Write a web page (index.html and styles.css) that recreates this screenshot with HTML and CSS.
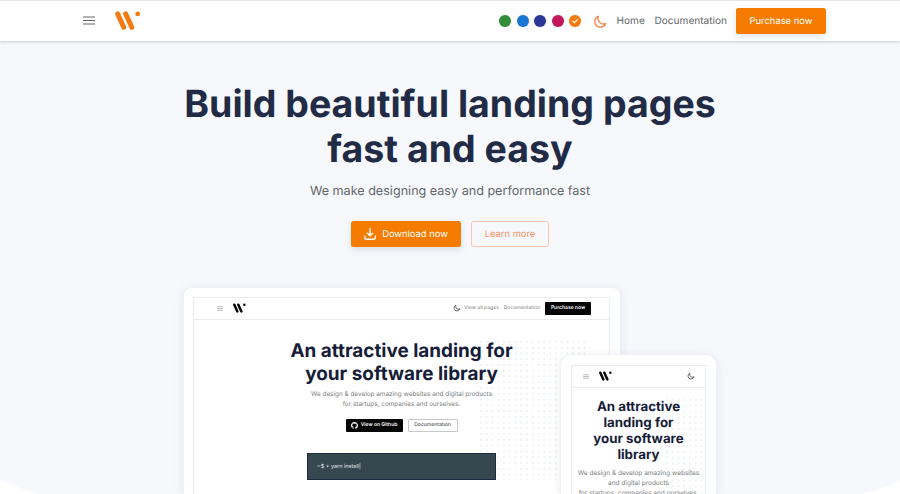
FILE: index.html
```html
<!DOCTYPE html>
<html lang="en">
<head>
<meta charset="utf-8">
<title>Build beautiful landing pages</title>
<link rel="stylesheet" href="styles.css">
</head>
<body>
<svg class="sprite" aria-hidden="true">
  <symbol id="logo" viewBox="0 0 26 19">
    <path d="M2.7 2.9 8.7 16.3M10.7 2.9 16.8 16.3" fill="none" stroke="currentColor" stroke-width="5" stroke-linecap="round"/>
    <circle cx="22.7" cy="2.9" r="2.4" fill="currentColor"/>
  </symbol>
  <symbol id="moon" viewBox="0 0 24 24">
    <path d="M20.354 15.354A9 9 0 0 1 8.646 3.646 9.003 9.003 0 0 0 12 21a9.003 9.003 0 0 0 8.354-5.646z" fill="none" stroke="currentColor" stroke-width="2" stroke-linecap="round" stroke-linejoin="round"/>
  </symbol>
  <symbol id="menu" viewBox="0 0 12 9">
    <path d="M0 1h12M0 4.5h12M0 8h12" fill="none" stroke="currentColor" stroke-width="1"/>
  </symbol>
</svg>

<header class="topbar">
  <svg class="topbar-menu"><use href="#menu"/></svg>
  <svg class="topbar-logo"><use href="#logo"/></svg>
  <div class="swatches">
    <span class="swatch green"></span>
    <span class="swatch blue"></span>
    <span class="swatch indigo"></span>
    <span class="swatch pink"></span>
    <span class="swatch orange"><svg viewBox="0 0 12 12"><path d="M3.8 6.2 5.4 7.7 8.4 4.6" fill="none" stroke="currentColor" stroke-width="1.1" stroke-linecap="round"/></svg></span>
  </div>
  <svg class="topbar-moon"><use href="#moon"/></svg>
  <a class="link home">Home</a>
  <a class="link docs">Documentation</a>
  <a class="btn purchase">Purchase now</a>
</header>

<main class="hero">
  <svg class="curve" viewBox="0 0 900 14" preserveAspectRatio="none"><path d="M0 0Q18 8 38 14H0zM900 0Q884 8 862 14H900z" fill="#fff"/></svg>
  <h1>Build beautiful landing pages<br>fast and easy</h1>
  <p class="sub">We make designing easy and performance fast</p>
  <div class="actions">
    <a class="btn download">
      <svg viewBox="0 0 12 12"><path d="M6 .6v7M3.4 5.2 6 7.8l2.6-2.6M.7 8.2v1.5q0 1.6 1.6 1.6h7.4q1.6 0 1.6-1.6V8.2" fill="none" stroke="currentColor" stroke-width="1.4" stroke-linecap="round" stroke-linejoin="round"/></svg>
      <span>Download now</span>
    </a>
    <a class="btn learn">Learn more</a>
  </div>

  <div class="devices">
    <section class="device desktop">
      <div class="screen">
        <div class="mini-bar">
          <svg class="mini-menu"><use href="#menu"/></svg>
          <svg class="mini-logo"><use href="#logo"/></svg>
          <svg class="mini-moon"><use href="#moon"/></svg>
          <span class="mini-link all">View all pages</span>
          <span class="mini-link mdocs">Documentation</span>
          <span class="mini-btn mini-purchase">Purchase now</span>
        </div>
        <div class="dots"></div>
        <div class="mini-body">
          <h2>An attractive landing for<br>your software library</h2>
          <p>We design &amp; develop amazing websites and digital products<br>for startups, companies and ourselves.</p>
          <div class="mini-actions">
            <span class="mini-btn github">
              <svg viewBox="0 0 16 16"><path fill="currentColor" d="M8 0C3.58 0 0 3.58 0 8c0 3.54 2.29 6.53 5.47 7.59.4.07.55-.17.55-.38 0-.19-.01-.82-.01-1.49-2.01.37-2.53-.49-2.69-.94-.09-.23-.48-.94-.82-1.13-.28-.15-.68-.52-.01-.53.63-.01 1.08.58 1.23.82.72 1.21 1.87.87 2.33.66.07-.52.28-.87.51-1.07-1.78-.2-3.64-.89-3.64-3.95 0-.87.31-1.59.82-2.15-.08-.2-.36-1.02.08-2.12 0 0 .67-.21 2.2.82a7.6 7.6 0 0 1 4 0c1.53-1.04 2.2-.82 2.2-.82.44 1.1.16 1.92.08 2.12.51.56.82 1.27.82 2.15 0 3.07-1.87 3.75-3.65 3.95.29.25.54.73.54 1.48 0 1.07-.01 1.93-.01 2.2 0 .21.15.46.55.38A8.01 8.01 0 0 0 16 8c0-4.42-3.58-8-8-8z"/></svg>
              <span>View on Github</span>
            </span>
            <span class="mini-btn mini-outline">Documentation</span>
          </div>
          <div class="terminal">~$ + yarn install|</div>
        </div>
      </div>
    </section>
    <section class="device phone">
      <div class="screen">
        <div class="mini-bar">
          <svg class="mini-menu"><use href="#menu"/></svg>
          <svg class="mini-logo"><use href="#logo"/></svg>
          <svg class="mini-moon"><use href="#moon"/></svg>
        </div>
        <div class="dots"></div>
        <div class="mini-body">
          <h2>An attractive<br>landing for<br>your software<br>library</h2>
          <p>We design &amp; develop amazing websites<br>and digital products<br>for startups, companies and ourselves.</p>
        </div>
      </div>
    </section>
  </div>
</main>
</body>
</html>
```
FILE: styles.css
```css
* { box-sizing: border-box; }

body {
  margin: 0;
  height: 494px;
  overflow: hidden;
  display: flex;
  flex-direction: column;
  background: #f6f8fc;
  font-family: Inter, "Liberation Sans", sans-serif;
  color: #646669;
  text-rendering: geometricPrecision;
}

.sprite { position: absolute; width: 0; height: 0; }
svg { display: block; flex: none; }
h1, h2, p { margin: 0; }

.topbar {
  position: relative;
  z-index: 1;
  flex: none;
  height: 41px;
  padding: 0 74px 0 83px;
  display: flex;
  align-items: center;
  background: #fff;
  border-top: 1px solid #e6e8ea;
  box-shadow: 0 1px 3px rgba(110, 125, 145, .34);
}
.topbar-menu { width: 12px; height: 9px; margin-top: -2px; color: #65676a; }
.topbar-logo { width: 26px; height: 19px; margin: -1px 0 0 20px; color: #f17c12; }
.swatches {
  display: flex;
  gap: 5.5px;
  margin-left: auto;
}
.swatch {
  width: 12px;
  height: 12px;
  border-radius: 50%;
  color: #fff;
  box-shadow: 0 0 2px rgba(100, 120, 140, .3);
}
.green { background: #348c38; }
.blue { background: #1976d2; }
.indigo { background: #2b3796; }
.pink { background: #c2185b; }
.orange { background: #f57c0c; }
.topbar-moon { width: 15px; height: 15px; margin-left: 12px; color: #f47b3c; }
.link { font-size: 10.1px; line-height: 16px; white-space: nowrap; }
.home { width: 28px; margin-left: 8.5px; }
.docs { width: 72px; margin-left: 10px; }
.btn {
  display: flex;
  align-items: center;
  justify-content: center;
  height: 26px;
  border-radius: 2.5px;
  font-size: 9.4px;
  white-space: nowrap;
}
.purchase {
  width: 90px;
  margin-left: 9.5px;
  background: #f57c00;
  color: #fff;
  box-shadow: 0 3px 7px rgba(140, 152, 164, .25);
}

.hero {
  position: relative;
  flex: 1;
  min-height: 0;
  padding-top: 41px;
  display: flex;
  flex-direction: column;
  align-items: center;
  text-align: center;
}
.curve { position: absolute; left: 0; bottom: 0; width: 100%; height: 14px; }
h1 {
  font-size: 37.5px;
  line-height: 45px;
  font-weight: 700;
  color: #222b45;
  white-space: nowrap;
}
.sub { margin-top: 10px; font-size: 12.6px; line-height: 20px; white-space: nowrap; }
.actions { display: flex; gap: 10px; margin-top: 19px; }
.download {
  width: 110px;
  gap: 6px;
  background: #f57c00;
  color: #fff;
  box-shadow: 0 3px 7px rgba(140, 152, 164, .25);
}
.download svg { width: 12px; height: 12px; }
.learn { width: 78px; border: 1px solid #f8c5ad; color: #f5935f; }

.devices {
  position: relative;
  width: 534px;
  height: 207px;
  flex: none;
  margin-top: 40px;
}
.device {
  background: #fff;
  border: 1px solid #f0f1f4;
  border-bottom: 0;
  box-shadow: 0 2px 10px rgba(100, 112, 140, .14);
}
.device .screen { position: relative; height: 100%; border: 1px solid #e9ebec; border-bottom: 0; }
.desktop { width: 438px; height: 207px; padding: 9px 10px 0 9px; border-radius: 9px 9px 0 0; }
.phone {
  position: absolute;
  left: 377px;
  top: 67px;
  width: 157px;
  height: 140px;
  padding: 10px 10px 0 10px;
  border-radius: 12px 12px 0 0;
}
.mini-bar {
  display: flex;
  align-items: center;
  height: 21.5px;
  border-bottom: 1px solid #e9ebec;
}
.mini-menu { width: 6px; height: 5px; color: #7a7c7e; }
.mini-logo { width: 13px; height: 10px; color: #050505; }
.mini-moon { width: 8px; height: 8px; margin-left: auto; color: #222; }
.mini-link { font-size: 5.1px; color: #7c7e80; white-space: nowrap; }
.mini-btn {
  display: flex;
  align-items: center;
  justify-content: center;
  height: 13px;
  border-radius: 1px;
  font-size: 5px;
  font-weight: 600;
  white-space: nowrap;
}
.desktop .mini-bar { padding: 0 18px 0 22.5px; }
.desktop .mini-logo { margin-left: 10.5px; }
.all { width: 35px; margin-left: 3.5px; }
.mdocs { width: 37px; margin-left: 4.5px; }
.mini-purchase { width: 46px; margin-left: 4.5px; background: #050505; color: #fff; }

.mini-body { position: relative; display: flex; flex-direction: column; align-items: center; }
.mini-body h2 { font-weight: 700; color: #161d38; white-space: nowrap; }
.mini-body p { color: #7c7e80; white-space: nowrap; }
.desktop .mini-body { padding-top: 19px; }
.desktop h2 { font-size: 18.9px; line-height: 23px; }
.desktop p { margin-top: 4px; font-size: 6.4px; line-height: 10px; }
.mini-actions { display: flex; gap: 5px; margin-top: 10px; }
.github { width: 57px; gap: 3px; background: #050505; color: #fff; }
.github svg { width: 7px; height: 7px; }
.mini-outline { width: 50px; border: 1px solid #c7c8c9; color: #555; font-weight: 500; }
.terminal {
  width: 189px;
  height: 27.5px;
  margin-top: 21px;
  padding-left: 9px;
  border: 1px solid #1c2c40;
  background: #37474f;
  color: #e4e9ec;
  font-size: 5.5px;
  line-height: 26px;
  text-align: left;
}
.dots {
  position: absolute;
  background-image: radial-gradient(circle, #dfe8e8 0 .5px, transparent .9px);
  background-size: 5.78px 5.78px;
}
.desktop .dots { left: 284px; top: 41px; width: 112px; height: 141px; }

.phone .mini-bar { padding: 0 10.5px 0 11px; }
.phone .mini-logo { margin-left: 10px; }
.phone .mini-body { padding-top: 11px; }
.phone h2 { font-size: 13.3px; line-height: 16px; }
.phone p { margin-top: 5px; font-size: 6.5px; line-height: 10px; }
.phone .dots { left: 92px; top: 31px; width: 40px; height: 98px; }
```
